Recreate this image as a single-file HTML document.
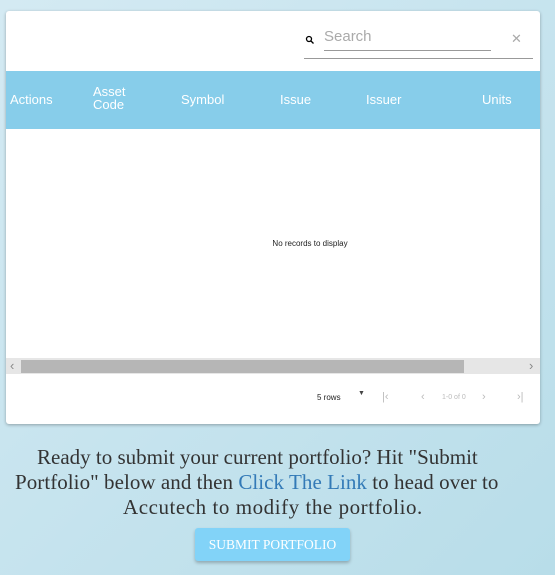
<!DOCTYPE html>
<html><head><style>
html,body{margin:0;padding:0}
body{width:555px;height:575px;overflow:hidden;background:linear-gradient(135deg,#d4eaf3,#b8dde9);font-family:"Liberation Sans",sans-serif;position:relative}
.card{position:absolute;left:6px;top:11px;width:534px;height:413px;background:#fff;border-radius:3px;box-shadow:0 1px 3px rgba(0,0,0,.3);overflow:hidden}
.search{position:absolute;left:298px;top:46px;width:229px;border-bottom:1px solid #999;height:1px}
.sline{position:absolute;left:318px;top:39px;width:167px;border-bottom:1px solid #999}
.ph{position:absolute;left:318px;top:17px;font-size:15px;color:#aaa}
.x{position:absolute;left:505px;top:20px;font-size:13px;color:#aaa}
.head{position:absolute;left:0;top:60px;width:534px;height:58px;background:#87cdea;color:#fff;font-size:13px}
.head span{position:absolute;top:21px}
.empty{position:absolute;top:228px;left:0;width:608px;text-align:center;font-size:8px;color:#222}
.sb{position:absolute;left:0;top:347px;width:534px;height:16px;background:#e6e6e6}
.thumb{position:absolute;left:15px;top:2px;width:443px;height:13px;background:#b6b6b6}
.pg{position:absolute;top:380px;font-size:11px;color:#bbb}
.l{position:absolute;font-family:"Liberation Serif",serif;font-size:21px;line-height:25px;color:#333;white-space:nowrap}
.btn{position:absolute;left:195px;top:528px;width:155px;height:33px;background:#82d3f8;border-radius:3px;box-shadow:0 2px 3px rgba(0,0,0,.25);color:#fff;font-family:"Liberation Serif",serif;font-size:13.5px;text-align:center;line-height:33px}
</style></head><body>
<div class="card">
 <svg style="position:absolute;left:299px;top:24px" width="10" height="10"><circle cx="4" cy="4" r="2.5" fill="none" stroke="#000" stroke-width="1.3"/><line x1="6" y1="6" x2="8.5" y2="8.5" stroke="#000" stroke-width="1.3"/></svg>
 <div class="ph">Search</div><div class="sline"></div><div class="x">✕</div>
 <div class="search"></div>
 <div class="head">
  <span style="left:4px">Actions</span>
  <span style="left:87px;top:14px;line-height:13px">Asset<br>Code</span>
  <span style="left:175px">Symbol</span>
  <span style="left:274px">Issue</span>
  <span style="left:360px">Issuer</span>
  <span style="left:476px">Units</span>
 </div>
 <div class="empty">No records to display</div>
 <div class="sb"><span style="position:absolute;left:4px;top:0px;font-size:13px;color:#888">‹</span><div class="thumb"></div><span style="position:absolute;left:523px;top:0px;font-size:13px;color:#888">›</span></div>
 <div class="pg" style="left:311px;top:382px;font-size:8px;color:#222">5 rows</div>
 <div class="pg" style="left:352px;top:379px;color:#444;font-size:7px">▼</div>
 <div class="pg" style="left:376px">|‹</div>
 <div class="pg" style="left:415px">‹</div>
 <div class="pg" style="left:436px;font-size:7px;top:383px">1-0 of 0</div>
 <div class="pg" style="left:476px">›</div>
 <div class="pg" style="left:511px">›|</div>
</div>
<div class="l" style="left:37px;top:445px">Ready to submit your current portfolio? Hit "Submit</div>
<div class="l" style="left:15px;top:470px;letter-spacing:0.05px">Portfolio" below and then <span style="color:#337ab7">Click The Link</span> to head over to</div>
<div class="l" style="left:123px;top:495px;letter-spacing:0.55px">Accutech to modify the portfolio.</div>
<div class="btn">SUBMIT PORTFOLIO</div>
</body></html>
